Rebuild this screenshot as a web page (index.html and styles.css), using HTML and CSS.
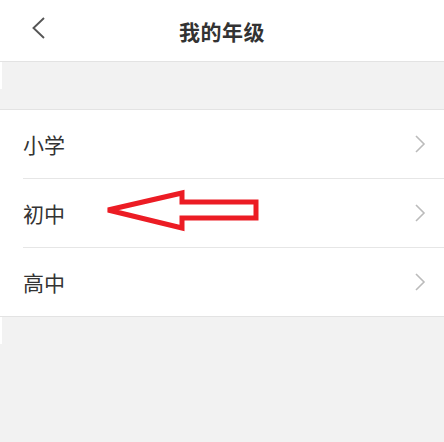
FILE: index.html
```html
<!DOCTYPE html>
<html lang="zh">
<head>
<meta charset="utf-8">
<link rel="stylesheet" href="styles.css">
</head>
<body>
<div class="page">
  <header class="topbar">
    <span class="back">
      <svg width="16" height="24" viewBox="0 0 16 24"><path d="M14 2 L3.5 12 L14 22" fill="none" stroke="#555" stroke-width="1.9"/></svg>
    </span>
    <h1 class="title">我的年级</h1>
  </header>
  <div class="gap"></div>
  <ul class="list">
    <li class="row"><span class="label">小学</span><svg class="chev" width="12" height="18" viewBox="0 0 12 18"><path d="M2 1 L10 9 L2 17" fill="none" stroke="#bbb" stroke-width="1.6"/></svg></li>
    <li class="row"><span class="label">初中</span><svg class="chev" width="12" height="18" viewBox="0 0 12 18"><path d="M2 1 L10 9 L2 17" fill="none" stroke="#bbb" stroke-width="1.6"/></svg></li>
    <li class="row"><span class="label">高中</span><svg class="chev" width="12" height="18" viewBox="0 0 12 18"><path d="M2 1 L10 9 L2 17" fill="none" stroke="#bbb" stroke-width="1.6"/></svg></li>
    <svg class="arrow" width="170" height="50" viewBox="100 188 170 50">
      <path d="M108 211 L182 194 L182 203 L256 203 L256 219 L182 219 L182 229 Z" fill="none" stroke="#ec1c24" stroke-width="5" stroke-linejoin="miter"/>
    </svg>
  </ul>
  <div class="rest"></div>
</div>
</body>
</html>
```
FILE: styles.css
```css
* { box-sizing: border-box; }
html, body { margin: 0; padding: 0; }
body {
  width: 444px;
  height: 442px;
  background: #f2f2f2;
  font-family: "Noto Sans CJK SC", "Noto Sans", sans-serif;
  color: #333;
  overflow: hidden;
}
.page { display: flex; flex-direction: column; height: 442px; }
.topbar {
  height: 62px;
  background: #fff;
  border-bottom: 1px solid #e3e3e3;
  display: flex;
  align-items: center;
  justify-content: center;
  position: relative;
  flex: none;
}
.back {
  position: absolute;
  left: 30px;
  top: 16px;
  width: 16px;
  height: 24px;
  display: flex;
}
.title {
  margin: 0;
  font-size: 21px;
  font-weight: 700;
  color: #333;
  letter-spacing: 0.5px;
  line-height: 1;
  padding-top: 2px;
}
.gap {
  height: 48px;
  flex: none;
  background: linear-gradient(#fff, #fff) 0 0 / 2px 27px no-repeat, #f2f2f2;
  border-bottom: 1px solid #e3e3e3;
}
.list {
  list-style: none;
  margin: 0;
  padding: 0 0 0 23px;
  background: #fff;
  border-bottom: 1px solid #e3e3e3;
  position: relative;
  flex: none;
}
.row {
  height: 69px;
  display: flex;
  align-items: center;
  justify-content: space-between;
  padding-right: 18px;
  border-bottom: 1px solid #e6e6e6;
}
.row:last-of-type { border-bottom: none; height: 68px; }
.label {
  font-size: 21px;
  color: #333;
  line-height: 1;
}
.chev { display: block; }
.arrow {
  position: absolute;
  left: 100px;
  top: 77px;
}
.rest {
  flex: 1;
  background: linear-gradient(#fff, #fff) 0 0 / 2px 27px no-repeat, #f2f2f2;
}
```
